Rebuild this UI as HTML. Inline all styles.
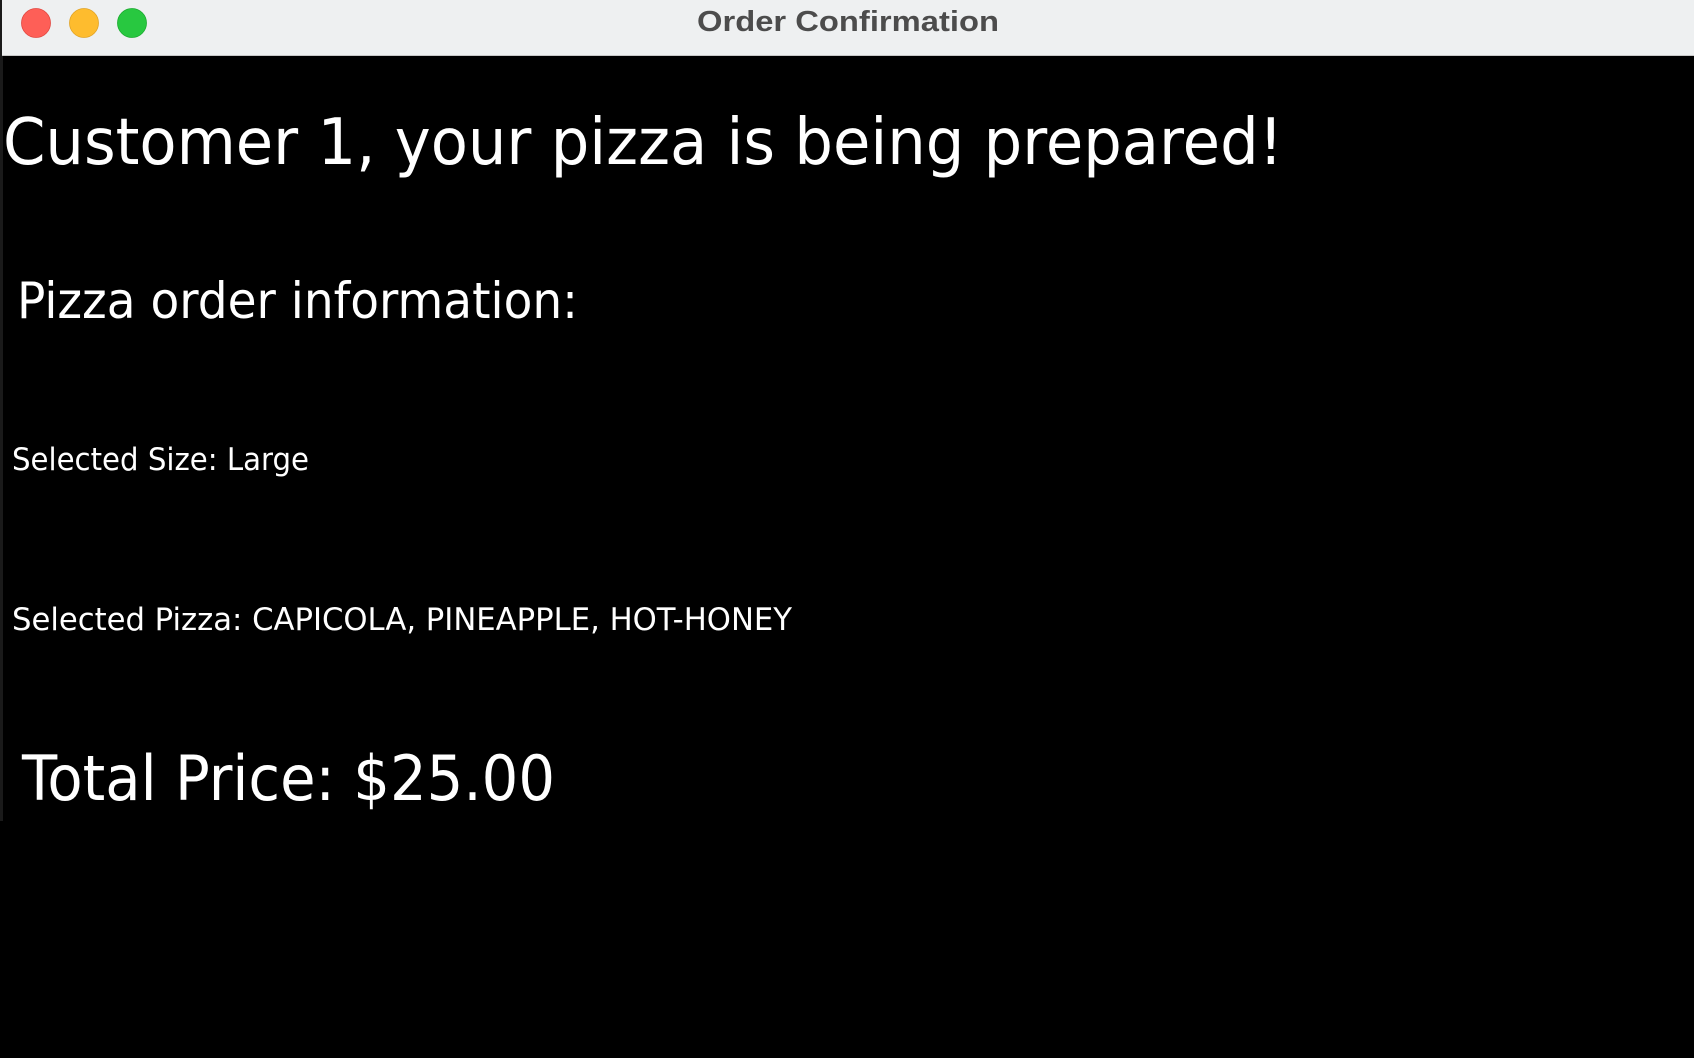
<!DOCTYPE html>
<html><head><meta charset="utf-8"><style>
html,body{margin:0;padding:0;width:1694px;height:1058px;overflow:hidden;background:#000}
svg{display:block}
</style></head><body>
<svg width="1694" height="1058" xmlns="http://www.w3.org/2000/svg">
<rect width="1694" height="1058" fill="#000"/>
<rect x="0" y="0" width="3" height="821" fill="#1a1a1a"/>
<rect x="2" y="0" width="1692" height="56" fill="#eef0f1"/>
<rect x="2" y="55" width="1692" height="1" fill="#c8c8c8"/>
<circle cx="36" cy="23" r="14.5" fill="#fe5f57" stroke="#e2463f" stroke-width="0.8"/>
<circle cx="84" cy="23" r="14.5" fill="#febc2e" stroke="#e1a325" stroke-width="0.8"/>
<circle cx="132" cy="23" r="14.5" fill="#28c840" stroke="#1aab2f" stroke-width="0.8"/>
<text x="848" y="31" text-anchor="middle" font-family="Liberation Sans, sans-serif" font-weight="bold" font-size="29" fill="#4c4c4c" textLength="302" lengthAdjust="spacingAndGlyphs">Order Confirmation</text>
<g font-family="DejaVu Sans, Liberation Sans, sans-serif" fill="#fff">
<text x="3" y="164" font-size="64" textLength="1280" lengthAdjust="spacingAndGlyphs">Customer 1, your pizza is being prepared!</text>
<text x="17" y="318" font-size="50" textLength="561" lengthAdjust="spacingAndGlyphs">Pizza order information:</text>
<text x="12" y="470" font-size="31" textLength="297" lengthAdjust="spacingAndGlyphs">Selected Size: Large</text>
<text x="12" y="630" font-size="31" textLength="780" lengthAdjust="spacingAndGlyphs">Selected Pizza: CAPICOLA, PINEAPPLE, HOT-HONEY</text>
<text x="22" y="800" font-size="62" textLength="533" lengthAdjust="spacingAndGlyphs">Total Price: $25.00</text>
</g>
</svg>
</body></html>
